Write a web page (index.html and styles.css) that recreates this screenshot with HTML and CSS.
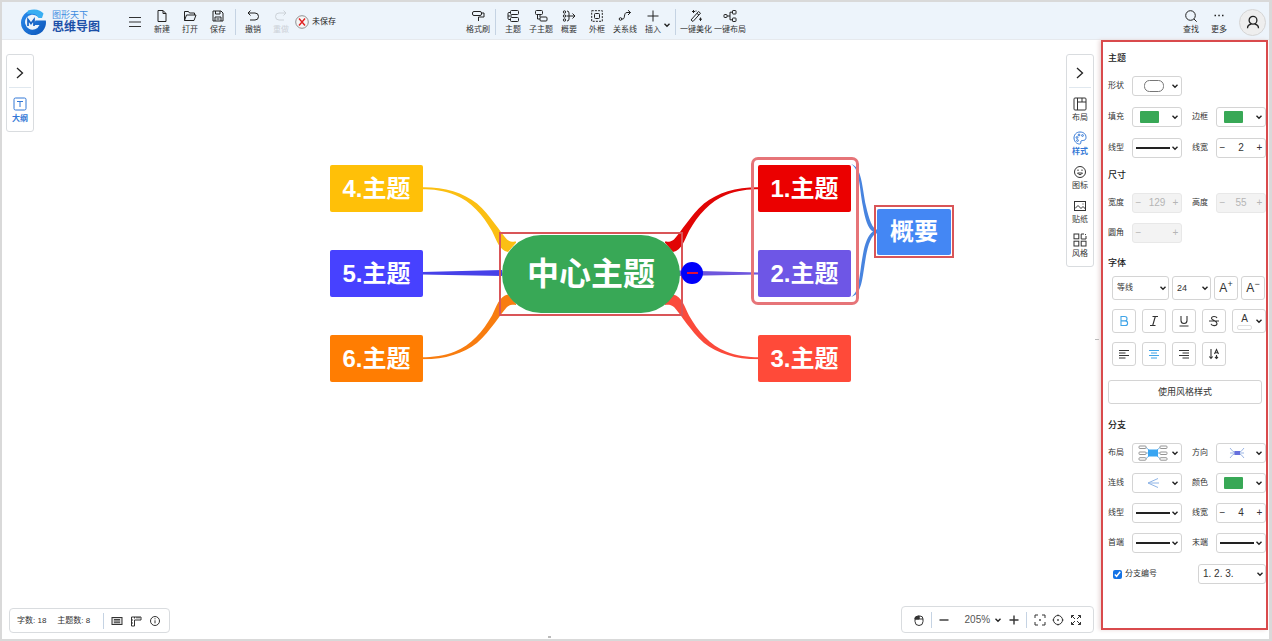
FILE: index.html
```html
<!DOCTYPE html>
<html lang="zh-CN">
<head>
<meta charset="utf-8">
<title>思维导图</title>
<link rel="stylesheet" href="styles.css">
</head>
<body>
<svg class="defs" aria-hidden="true">
  <symbol id="chev" viewBox="0 0 8 8"><path d="M1.5 2.7 4 5.2 6.500 2.700" fill="none" stroke="currentColor" stroke-width="1.4"/></symbol>
  <symbol id="next" viewBox="0 0 12 12"><path d="M3 1 8.500 6 3 11" fill="none" stroke="currentColor" stroke-width="1.3"/></symbol>
  <symbol id="arm" viewBox="422 187 94 66"><path d="M422 187.300C444 187 463 192.500 477 203.500 491 216 500 232 507 239.500 510 242 513 242 517 241.500L508 252C499 250 497 241 492 231 483 215 471 201.500 455 195 445 190.500 432 189.300 422 189.300Z" fill="currentColor"/></symbol>
</svg>
<div class="app">
  <header class="topbar">
    <a class="brand" href="#">
      <svg class="logo" viewBox="0 0 26 26">
        <defs><linearGradient id="lg" x1="0" y1="0" x2="1" y2="1"><stop offset="0" stop-color="#2a8df0"/><stop offset="1" stop-color="#0d55b8"/></linearGradient></defs>
        <path d="M22.500 5A12.500 12.500 0 1 0 25.800 11.500H15.500l-2 4.500H19.500A7.500 7.500 0 1 1 17.500 7.500Z" fill="url(#lg)"/>
        <path d="M8 1.500C15-1 21 1 23.500 4.500L22 9H18.500C16.500 5 14 4 7 5Z" fill="#38aef2"/>
        <path d="M8 17V10.500l3 4 3-4V17" fill="none" stroke="#1763c4" stroke-width="1.700"/>
      </svg>
      <span class="brand-text"><span class="brand-small">图形天下</span><span class="brand-big">思维导图</span></span>
    </a>
    <button class="menu" aria-label="菜单"><svg viewBox="0 0 14 12"><path d="M1 1.500h12M1 6h12M1 10.500h12"/></svg></button>
    <div class="tools">
      <button class="tool"><svg viewBox="0 0 14 14"><path d="M3 1.500h5l3 3v8H3ZM8 1.500v3h3"/></svg>新建</button>
      <button class="tool"><svg viewBox="0 0 14 14"><path d="M1.500 11.500v-9h4l1 1.500h5v2M1.500 11.500l2-5.500h9.500l-2 5.500Z"/></svg>打开</button>
      <button class="tool"><svg viewBox="0 0 14 14"><path d="M2 2h8l2 2v8H2ZM4.500 2v3h4.500V2M4 12V8h6v4M5.500 10h3"/></svg>保存</button>
      <span class="divider"></span>
      <button class="tool"><svg viewBox="0 0 14 14"><path d="M4.500 1.500 2 4l2.500 2.500M2 4h7a3.500 3.500 0 0 1 0 7H4"/></svg>撤销</button>
      <button class="tool" disabled><svg viewBox="0 0 14 14"><path d="M9.500 1.500 12 4 9.500 6.500M12 4H5a3.500 3.500 0 0 0 0 7h5"/></svg>重做</button>
      <span class="unsaved"><svg viewBox="0 0 14 14"><circle cx="7" cy="7" r="6.300" fill="#f5f5f5" stroke="#777" stroke-width=".8"/><path d="m4 3.500 6 7M10 3.500l-6 7" stroke="#e02020" stroke-width="1.400"/></svg>未保存</span>
    </div>
    <div class="tools tools-mid">
      <button class="tool"><svg viewBox="0 0 14 14"><rect x="1.500" y="2.500" width="9" height="4" rx="1.500"/><path d="M10.500 4h2.500v4H7.500v4"/></svg>格式刷</button>
      <span class="divider"></span>
      <button class="tool"><svg viewBox="0 0 14 14"><rect x="4.500" y="1.500" width="8" height="4" rx="1"/><rect x="4.500" y="8.500" width="8" height="4" rx="1"/><path d="M4.500 3.500H3a1 1 0 0 0-1 1v5a1 1 0 0 0 1 1h1.500M2 7h4"/></svg>主题</button>
      <button class="tool"><svg viewBox="0 0 14 14"><rect x="1.500" y="1.500" width="7" height="4" rx="1"/><rect x="6" y="8" width="7" height="4" rx="1"/><path d="M3.500 5.500V10H6M6 5.500V8"/></svg>子主题</button>
      <button class="tool"><svg viewBox="0 0 14 14"><circle cx="2.500" cy="3" r="1.200"/><circle cx="2.500" cy="7" r="1.200"/><circle cx="2.500" cy="11" r="1.200"/><path d="M5 2q2 0 2 2v6q0 2-2 2M4.500 7H13M10.500 4.500 13 7l-2.500 2.500"/></svg>概要</button>
      <button class="tool"><svg viewBox="0 0 14 14"><rect x="1.700" y="1.700" width="10.600" height="10.600" stroke-dasharray="2 1.200"/><rect x="4.500" y="4.500" width="5" height="5" rx="1"/></svg>外框</button>
      <button class="tool"><svg viewBox="0 0 14 14"><circle cx="2.500" cy="10" r="1.300"/><path d="M3.800 10C8 11 5 3.500 9 3.500h3.500M10 1.200l2.500 2.300L10 6"/></svg>关系线</button>
      <button class="tool tool-insert"><svg viewBox="0 0 14 14"><path d="M7 1.500v11M1.500 7h11"/></svg>插入</button>
      <svg class="chev chev-insert"><use href="#chev"/></svg>
      <span class="divider"></span>
      <button class="tool tool-wide"><svg viewBox="0 0 14 14"><path d="m2 11 7.500-8.500 2 1.700L4 12.500ZM8 4.500l2 1.500M4.500 1v3M3 2.500h3M11.500 8.500v3.500M10 10.200h3M7 1.500v1"/></svg>一键美化</button>
      <button class="tool tool-wide"><svg viewBox="0 0 14 14"><rect x="1" y="5.500" width="3" height="3" rx=".6"/><rect x="9.500" y="1.500" width="3.500" height="3.500" rx=".6"/><rect x="9.500" y="9" width="3.500" height="3.500" rx=".6"/><path d="M4 7h3M9.500 3.200H7v7.600h2.500"/></svg>一键布局</button>
    </div>
    <div class="tools tools-end">
      <button class="tool"><svg viewBox="0 0 14 14"><circle cx="6.500" cy="6.500" r="4.800"/><path d="m10 10 2.700 2.700"/></svg>查找</button>
      <button class="tool"><svg viewBox="0 0 14 14"><path d="M2.500 6.500H4M6.300 6.500h1.500M10 6.500h1.500" stroke-width="1.600"/></svg>更多</button>
      <button class="avatar" aria-label="账户"><svg viewBox="0 0 14 14"><circle cx="7" cy="5.300" r="3.900"/><path d="M1.500 13.200C1.500 10.800 3 9.500 5.300 9M12.500 13.200c0-2.400-1.500-3.700-3.800-4.200"/></svg></button>
    </div>
  </header>

  <main class="workspace">
    <section class="canvas">
      <svg class="links" viewBox="2 41 1000 400">
        <use class="c4" href="#arm" x="422" y="187" width="94" height="66"/>
        <use class="c6" href="#arm" x="422" y="187" width="94" height="66" transform="translate(0 546.500) scale(1 -1)"/>
        <use class="c1" href="#arm" x="422" y="187" width="94" height="66" transform="translate(1181 0) scale(-1 1)"/>
        <use class="c3" href="#arm" x="422" y="187" width="94" height="66" transform="translate(1181 546.500) scale(-1 -1)"/>
        <path d="M422 272 502 270v6l-80-1.500Z" fill="#4741e8"/>
        <path d="M759 272.500 679 270.500v5.500l80-1.500Z" fill="#6e56dd"/>
        <path d="M851 164C862 167 862 187 866 206 869 219 872 229 878 230V233C871 234 868 246 866 256 862 280 862 294 851 297 860 292 859 275 863 254 865 243 868 235 873 231.500 868 229 865 219 863 207 859 186 860 169 851 164Z" fill="#4884df"/>
      </svg>
      <div class="boundary"></div>
      <div class="mark mark-center"></div>
      <div class="node center">中心主题</div>
      <div class="node n4">4.主题</div>
      <div class="node n5">5.主题</div>
      <div class="node n6">6.主题</div>
      <div class="node n1">1.主题</div>
      <div class="node n2">2.主题</div>
      <div class="node n3">3.主题</div>
      <div class="node summary">概要</div>
      <div class="mark mark-summary"></div>
      <button class="collapse" aria-label="收起"></button>

      <nav class="rail rail-left">
        <button class="rail-toggle" aria-label="展开"><svg><use href="#next"/></svg></button>
        <button class="rail-item active"><svg viewBox="0 0 14 14"><rect x="1" y="1" width="12" height="12" rx="1.500"/><path d="M4 4.500h6M7 4.500V10"/></svg>大纲</button>
      </nav>
      <nav class="rail rail-right">
        <button class="rail-toggle" aria-label="收起"><svg><use href="#next"/></svg></button>
        <button class="rail-item"><svg viewBox="0 0 14 14"><rect x="1" y="1" width="12" height="12" rx="1"/><path d="M4.500 1v12M4.500 5H13M9 1v4"/></svg>布局</button>
        <button class="rail-item active"><svg viewBox="0 0 14 14"><path d="M7 1C3 1 1 4 1 7s2.500 6 5.500 6c2 0 1-2 1.500-3s5 .5 5-3.500C13 3 10.500 1 7 1Z"/><circle cx="4" cy="6.500" r=".9"/><circle cx="6" cy="4" r=".9"/><circle cx="9.500" cy="4.500" r=".9"/><circle cx="4.500" cy="9.500" r=".9"/></svg>样式</button>
        <button class="rail-item"><svg viewBox="0 0 14 14"><circle cx="7" cy="7" r="5.500"/><path d="M4.500 8q2.500 3.500 5 0ZM5 4.500v1.500M9 4.500v1.500"/></svg>图标</button>
        <button class="rail-item"><svg viewBox="0 0 14 14"><rect x="1.500" y="2.500" width="11" height="9"/><path d="m2 9.500 3-3 3 3 2-2 2.500 2.500M9.500 5h1"/></svg>贴纸</button>
        <button class="rail-item"><svg viewBox="0 0 14 14"><rect x="1" y="1" width="4.800" height="4.800"/><path d="M13 3v3H8.200V1H11M12 1.200l1 .8"/><rect x="1" y="8.200" width="4.800" height="4.800"/><rect x="8.200" y="8.200" width="4.800" height="4.800"/></svg>风格</button>
      </nav>

      <div class="dock dock-stats">
        <span>字数: 18</span><span>主题数: 8</span><span class="divider"></span>
        <button aria-label="快捷键"><svg viewBox="0 0 12 12"><rect x="1" y="2.500" width="10" height="7" fill="#ddd"/><path d="M3 4.500h6M3 6h6M3 7.700h6" stroke-width=".9"/></svg></button>
        <button aria-label="标尺"><svg viewBox="0 0 12 12"><path d="M1.500 2h9.500v3H4.500v6h-3ZM4.500 2v1.500M7 2v1.500M9 2v1.500M1.500 5H3M1.500 8H3"/></svg></button>
        <button aria-label="信息"><svg viewBox="0 0 12 12"><circle cx="6" cy="6" r="4.500"/><path d="M6 5.300v3M6 3.300v1"/></svg></button>
      </div>
      <div class="dock dock-zoom">
        <button aria-label="鼠标"><svg viewBox="0 0 12 12"><path d="M2 5h8v2.500a3.500 3.500 0 0 1-8 0ZM2 5a3 3 0 0 1 3-3h2a3 3 0 0 1 3 3M6 2v3"/><path d="M2 5V3.500L6 2v3Z" fill="#333"/></svg></button>
        <span class="divider"></span>
        <button aria-label="缩小"><svg viewBox="0 0 12 12"><path d="M1.500 6h9" stroke-width="1.400"/></svg></button>
        <button class="zoom-value">205%<svg class="chev"><use href="#chev"/></svg></button>
        <button aria-label="放大"><svg viewBox="0 0 12 12"><path d="M1.500 6h9M6 1.500v9" stroke-width="1.400"/></svg></button>
        <span class="divider"></span>
        <button aria-label="适应"><svg viewBox="0 0 12 12"><path d="M4 1H1v3M8 1h3v3M4 11H1V8M8 11h3V8M5.200 6h1.600M6 5.200v1.600"/></svg></button>
        <button aria-label="居中"><svg viewBox="0 0 12 12"><circle cx="6" cy="6" r="4.500"/><path d="M5.200 6h1.600M6 5.200v1.600M6 .5V2M6 10v1.500M.5 6H2M10 6h1.500"/></svg></button>
        <button aria-label="全屏"><svg viewBox="0 0 12 12"><path d="M4 1.500H1.500V4M8 1.500h2.500V4M4 10.500H1.500V8M8 10.500h2.500V8M1.500 1.500 5 5M10.500 1.500 7 5M1.500 10.500 5 7M10.500 10.500 7 7"/></svg></button>
      </div>
      <span class="grip grip-right"></span>
      <span class="grip grip-bottom"></span>
    </section>

    <aside class="panel">
      <h2>主题</h2>
      <div class="rows">
        <span>形状</span><button class="pick" aria-label="形状"><svg class="pic" viewBox="0 0 34 16"><rect x="8.500" y="2.500" width="19" height="11" rx="5" fill="none" stroke="#777"/></svg><svg class="chev"><use href="#chev"/></svg></button><span></span><span></span>
        <span>填充</span><button class="pick" aria-label="填充"><i class="swatch"></i><svg class="chev"><use href="#chev"/></svg></button>
        <span>边框</span><button class="pick" aria-label="边框"><i class="swatch"></i><svg class="chev"><use href="#chev"/></svg></button>
        <span>线型</span><button class="pick" aria-label="线型"><i class="line"></i><svg class="chev"><use href="#chev"/></svg></button>
        <label for="w1">线宽</label><div class="stepper"><button>−</button><input id="w1" value="2"><button>+</button></div>
      </div>
      <h2>尺寸</h2>
      <div class="rows">
        <label for="w2">宽度</label><div class="stepper off"><button disabled>−</button><input id="w2" value="129" disabled><button disabled>+</button></div>
        <label for="h2">高度</label><div class="stepper off"><button disabled>−</button><input id="h2" value="55" disabled><button disabled>+</button></div>
        <label for="r2">圆角</label><div class="stepper off"><button disabled>−</button><input id="r2" value="" disabled><button disabled>+</button></div>
      </div>
      <h2 class="title-font">字体</h2>
      <div class="format">
        <div class="font-row">
          <span class="select font-family"><select aria-label="字体"><option>等线</option></select><svg class="chev"><use href="#chev"/></svg></span>
          <span class="select font-size"><select aria-label="字号"><option>24</option></select><svg class="chev"><use href="#chev"/></svg></span>
          <button class="key letter">A<sup>+</sup></button>
          <button class="key letter">A<sup>−</sup></button>
        </div>
        <div class="key-row">
          <button class="key on" aria-label="加粗"><svg viewBox="0 0 12 12"><path d="M3 1.500h3.800a2.200 2.200 0 0 1 0 4.400H3ZM3 5.900h4.300a2.300 2.300 0 0 1 0 4.600H3Z"/></svg></button>
          <button class="key" aria-label="斜体"><svg viewBox="0 0 12 12"><path d="M4.500 1.500H10M2 10.500h5.500M7.300 1.500l-2.600 9"/></svg></button>
          <button class="key" aria-label="下划线"><svg viewBox="0 0 12 12"><path d="M3 1v4.500a3 3 0 0 0 6 0V1M1.500 11h9"/></svg></button>
          <button class="key" aria-label="删除线"><svg viewBox="0 0 12 12"><path d="M9 3C8.300 1 3.500.8 3.500 3.400 3.500 5 9 5.700 9 8.500c0 2.800-5.300 2.700-6 .4M1 6h10"/></svg></button>
          <button class="key color"><span>A<i></i></span><svg class="chev"><use href="#chev"/></svg></button>
        </div>
        <div class="key-row">
          <button class="key" aria-label="左对齐"><svg viewBox="0 0 12 12"><path d="M1 2.500h10M1 5h6.500M1 7.500h10M1 10h6.500"/></svg></button>
          <button class="key on" aria-label="居中对齐"><svg viewBox="0 0 12 12"><path d="M1 2.500h10M3 5h6M1 7.500h10M3 10h6"/></svg></button>
          <button class="key" aria-label="右对齐"><svg viewBox="0 0 12 12"><path d="M1 2.500h10M4.500 5H11M1 7.500h10M4.500 10H11"/></svg></button>
          <button class="key" aria-label="文字方向"><svg viewBox="0 0 12 12"><path d="M3 1v9.500M1.300 8.500 3 10.500l1.700-2M6.500 6 8.500 1.500l2 4.500M7 4.700h3M8.500 7v3.500M7 9l1.500 1.500L10 9"/></svg></button>
        </div>
      </div>
      <button class="apply">使用风格样式</button>
      <h2>分支</h2>
      <div class="rows rows-branch">
        <span>布局</span><button class="pick" aria-label="布局"><svg class="pic" viewBox="0 0 30 16"><g fill="none" stroke="#888" stroke-width=".9"><path d="M8 2.500 11 5M8 8h3M8 13.500l3-2.500M22 2.500 19 5M22 8h-3M22 13.500 19 11" stroke="#6ab0e8"/><rect x="1" y="1" width="7" height="2.500" rx=".8"/><rect x="1" y="7" width="7" height="2.500" rx=".8"/><rect x="1" y="12.700" width="7" height="2.500" rx=".8"/><rect x="22" y="1" width="7" height="2.500" rx=".8"/><rect x="22" y="7" width="7" height="2.500" rx=".8"/><rect x="22" y="12.700" width="7" height="2.500" rx=".8"/></g><rect x="10" y="4.500" width="10" height="7" fill="#38a5f2"/></svg><svg class="chev"><use href="#chev"/></svg></button>
        <span>方向</span><button class="pick" aria-label="方向"><svg class="pic" viewBox="0 0 30 16"><path d="M8 3q2 4 7 5 5-1 7-5M8 13q2-4 7-5 5 1 7 5M8 8h14" fill="none" stroke="#9bb5e5"/><rect x="12.500" y="6" width="5.500" height="4" fill="#6670dd"/></svg><svg class="chev"><use href="#chev"/></svg></button>
        <span>连线</span><button class="pick" aria-label="连线"><svg class="pic" viewBox="0 0 30 16"><path d="M20 3.500 10 8l10 4.500M10 8h11" fill="none" stroke="#8eb4e6"/></svg><svg class="chev"><use href="#chev"/></svg></button>
        <span>颜色</span><button class="pick" aria-label="颜色"><i class="swatch"></i><svg class="chev"><use href="#chev"/></svg></button>
        <span>线型</span><button class="pick" aria-label="线型"><i class="line"></i><svg class="chev"><use href="#chev"/></svg></button>
        <label for="w3">线宽</label><div class="stepper"><button>−</button><input id="w3" value="4"><button>+</button></div>
        <span>首端</span><button class="pick" aria-label="首端"><i class="line"></i><svg class="chev"><use href="#chev"/></svg></button>
        <span>末端</span><button class="pick" aria-label="末端"><i class="line"></i><svg class="chev"><use href="#chev"/></svg></button>
      </div>
      <div class="numbering">
        <label><input type="checkbox" checked>分支编号</label>
        <span class="select"><select aria-label="编号样式"><option>1. 2. 3.</option></select><svg class="chev"><use href="#chev"/></svg></span>
      </div>
    </aside>
  </main>
</div>
</body>
</html>
```
FILE: styles.css
```css
* { box-sizing: border-box; }
body {
  margin: 0;
  font: 8px/12px "Liberation Sans", "Noto Sans CJK SC", sans-serif;
  color: #333;
}
button, input, select { font: inherit; color: inherit; }
button { padding: 0; border: 0; background: none; }
svg { display: block; fill: none; stroke: currentColor; }
.defs { display: none; }
.app {
  display: flex;
  flex-direction: column;
  height: 100vh;
  border: 2px solid #d9d9d9;
  border-right-width: 3px;
  background: #fff;
  overflow: hidden;
}
.chev { width: 8px; height: 8px; flex: none; color: #222; stroke: none; }

/* Top bar */
.topbar {
  display: flex;
  align-items: center;
  flex: none;
  height: 38px;
  padding: 3px 3px 0 18px;
  background: #edf4fb;
  border-bottom: 1px solid #e6e9ed;
}
.brand { display: flex; align-items: center; gap: 6px; text-decoration: none; }
.logo { width: 26px; height: 26px; stroke: none; }
.brand-text { display: flex; flex-direction: column; }
.brand-small { font-size: 9px; line-height: 10px; color: #3e8be0; }
.brand-big { font-size: 12px; line-height: 14px; font-weight: 700; color: #1c50a8; }
.menu { width: 14px; margin: 0 6px 0 28px; }
.tools { display: flex; align-items: center; }
.tools-mid { margin-left: 128px; }
.tools-end { margin-left: auto; }
.tool {
  display: flex;
  flex-direction: column;
  align-items: center;
  width: 28px;
  line-height: 12px;
  white-space: nowrap;
}
.tool svg { width: 14px; height: 14px; color: #222; margin-bottom: 1px; }
.tool:disabled, .tool:disabled svg { color: #ccd2d8; }
.chev-insert { margin: 6px 1px 0 -4px; }
.tool-wide { width: 34px; }
.divider { width: 1px; height: 26px; margin: 0 3px; background: #c5d3e3; }
.unsaved { display: flex; align-items: center; gap: 3px; color: #222; }
.unsaved svg { width: 14px; height: 14px; }
.avatar {
  display: grid;
  place-items: center;
  width: 27px;
  height: 27px;
  margin-left: 6px;
  border: 1px solid #d5d5d5;
  border-radius: 50%;
  background: #eee;
  color: #222;
}
.avatar svg { width: 14px; height: 14px; stroke-width: 1.3; }

/* Workspace */
.workspace { display: flex; flex: 1; min-height: 0; }
.canvas { position: relative; flex: 1; overflow: hidden; }
.links { position: absolute; left: 0; top: 1px; width: 1000px; height: 400px; stroke: none; }
.c4 { color: #fbbf13; }
.c6 { color: #f87d10; }
.c1 { color: #e10505; }
.c3 { color: #fb4a3b; }
.node {
  position: absolute;
  display: grid;
  place-items: center;
  width: 93px;
  height: 47px;
  border-radius: 2px;
  color: #fff;
  font-size: 24px;
  font-weight: 700;
  line-height: 36px;
  white-space: nowrap;
}
.center { left: 500px; top: 195px; width: 178px; height: 78px; border-radius: 39px; background: #38a856; font-size: 32px; }
.n4 { left: 328px; top: 125px; background: #ffc008; }
.n5 { left: 328px; top: 210px; background: #4741ff; }
.n6 { left: 328px; top: 295px; background: #ff7d02; }
.n1 { left: 756px; top: 125px; background: #eb0000; }
.n2 { left: 756px; top: 210px; background: #6e56e6; }
.n3 { left: 756px; top: 295px; background: #ff4a39; }
.summary { left: 875px; top: 169px; width: 74px; height: 46px; background: #4487f4; }
.boundary { position: absolute; left: 749px; top: 117px; width: 108px; height: 148px; border: 3px solid #e67478; border-radius: 7px; }
.mark { position: absolute; border: 2px solid #d95558; }
.mark-center { left: 497px; top: 192px; width: 184px; height: 84px; }
.mark-summary { left: 872px; top: 165px; width: 80px; height: 53px; }
.collapse { position: absolute; left: 679px; top: 222px; width: 22px; height: 22px; border-radius: 50%; background: #0000fa; }
.collapse::after { content: ""; display: block; width: 11px; height: 2px; margin: auto; background: #e0103c; }

/* Floating bars */
.rail {
  position: absolute;
  top: 14px;
  width: 28px;
  padding: 0 2px 6px;
  border: 1px solid #d9dcdf;
  border-radius: 3px;
  background: #fff;
}
.rail-left { left: 4px; padding-bottom: 4px; }
.rail-right { right: 7px; }
.rail-toggle { display: grid; place-items: center; width: 100%; height: 33px; padding-top: 3px; border-bottom: 1px solid #e0e8ef; color: #222; }
.rail-toggle svg { width: 12px; height: 12px; }
.rail-item { display: flex; flex-direction: column; align-items: center; gap: 1px; width: 100%; margin-top: 7px; line-height: 12px; }
.rail-item svg { width: 14px; height: 14px; }
.rail-left .rail-item { margin: 9px 0 2px; gap: 2px; }
.rail-right .rail-item:nth-child(2) { margin-top: 9px; }
.rail .active { color: #3378d6; font-weight: 700; }
.dock {
  position: absolute;
  display: flex;
  align-items: center;
  border: 1px solid #d9dcdf;
  border-radius: 4px;
  background: #fff;
}
.dock svg { width: 12px; height: 12px; }
.dock .divider { height: 16px; margin: 0; }
.dock-stats { left: 7px; bottom: 6px; width: 161px; height: 25px; padding-left: 7px; gap: 7px; }
.dock-stats > span:nth-child(2) { margin: 0 6px 0 4px; }
.dock-zoom { right: 7px; bottom: 6px; width: 193px; height: 27px; padding: 0 11px; justify-content: space-between; }
.zoom-value { display: flex; align-items: center; gap: 4px; margin-left: 8px; font-size: 10px; color: #555; }
.dock .chev { width: 8px; height: 8px; }
.grip { position: absolute; background: #bbb; }
.grip-right { right: 2px; top: 299px; width: 4px; height: 1px; }
.grip-bottom { left: 546px; bottom: 1px; width: 3px; height: 2px; }

/* Style panel */
.panel {
  flex: none;
  width: 167px;
  margin: 0 1px 9px 0;
  padding: 8px 0 0 5px;
  border: 2px solid #d94a4c;
  box-shadow: -2px 0 4px #e8dada;
  overflow: hidden;
}
h2 { margin: 0 0 10px; font-size: 9px; line-height: 16px; font-weight: 500; color: #222; }
.rows { display: grid; grid-template-columns: 24px 50px 34px 50px; row-gap: 11px; align-items: center; }
.rows > :nth-child(4n + 3) { padding-left: 10px; }
.rows + h2 { margin-top: 9px; }
.rows + h2 + .rows, .rows-branch { row-gap: 10px; }
.rows + .title-font { margin: 12px 0 5px; }
.pick, .stepper, .select, .key, .apply { border: 1px solid #d4d4d4; border-radius: 3px; background: #fff; }
.pick { display: flex; align-items: center; justify-content: space-between; height: 20px; padding: 0 2px 0 3px; }
.pic { width: 34px; height: 16px; stroke: none; }
.swatch { width: 19px; height: 12px; margin-left: 4px; border-radius: 1px; background: #38a856; }
.line { width: 34px; height: 2px; background: #222; }
.stepper { display: flex; align-items: center; height: 20px; font-size: 10px; }
.stepper button { flex: none; width: 11px; }
.stepper input { width: 100%; min-width: 0; padding: 0; border: 0; background: none; text-align: center; }
.off { background: #f3f3f3; border-color: #e8e8e8; color: #b5b5b5; }
.select { display: flex; align-items: center; position: relative; height: 24px; }
.select select { width: 100%; height: 100%; padding: 0 10px 0 4px; border: 0; background: none; appearance: none; }
.select .chev { position: absolute; right: 1px; pointer-events: none; }
.format { display: flex; flex-direction: column; gap: 9px; margin-left: 4px; }
.font-row { display: flex; gap: 3px; }
.font-family { width: 57px; }
.font-size { width: 39px; font-size: 9px; }
.key-row { display: flex; gap: 6px; }
.key { display: grid; place-items: center; flex: none; width: 24px; height: 24px; }
.key svg { width: 12px; height: 12px; stroke-width: 1.1; }
.key.on { color: #3fa4e8; }
.key.letter { display: block; font-size: 12px; line-height: 22px; }
.key sup { font-size: 9px; line-height: 1px; }
.key.color { display: flex; align-items: center; justify-content: space-between; width: 34px; padding: 0 2px 0 4px; font-size: 10px; line-height: 12px; }
.key.color .chev { width: 8px; height: 8px; }
.key.color i { display: block; width: 15px; height: 5px; border: 1px solid #e0e0e0; border-radius: 2px; }
.apply { display: block; width: calc(100% - 4px); height: 24px; margin: 14px 0 13px; font-size: 9px; }
.numbering { display: flex; align-items: center; justify-content: space-between; margin-top: 11px; }
.numbering label { display: flex; align-items: center; gap: 3px; margin-left: 5px; }
.numbering input { width: 9px; height: 9px; margin: 0; accent-color: #1473e6; }
.numbering .select { width: 68px; height: 20px; font-size: 10px; }
```
